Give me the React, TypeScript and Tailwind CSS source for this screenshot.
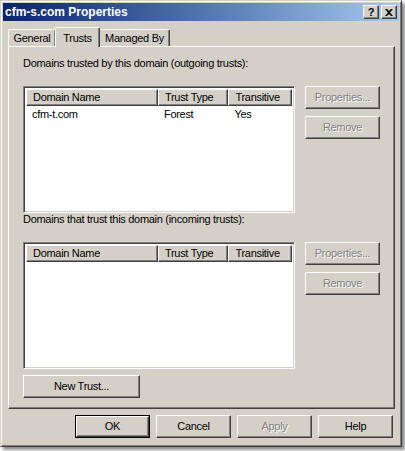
import React from "react";

const face = "bg-[#d4d0c8]";
const raised =
  "border border-t-white border-l-white border-r-[#404040] border-b-[#404040] shadow-[inset_-1px_-1px_0_#808080]";
const sunken =
  "border border-t-[#808080] border-l-[#808080] border-r-white border-b-white shadow-[inset_1px_1px_0_#404040,inset_-1px_-1px_0_#d4d0c8]";

function Btn({
  label,
  disabled,
  isDefault,
  className = "",
}: {
  label: string;
  disabled?: boolean;
  isDefault?: boolean;
  className?: string;
}) {
  const inner = (
    <div
      className={`${raised} ${face} h-full w-full flex items-center justify-center ${
        disabled ? "text-[#808080] [text-shadow:1px_1px_0_#ffffff]" : "text-black"
      }`}
    >
      {label}
    </div>
  );
  if (isDefault) {
    return <div className={`border border-black ${className}`}>{inner}</div>;
  }
  return <div className={className}>{inner}</div>;
}

function ListView({ rows }: { rows: string[][] }) {
  return (
    <div className={`${sunken} bg-white w-[272px] h-[127px] p-[2px] flex flex-col`}>
      <div className="flex h-[17px]">
        <div className={`${raised} ${face} w-[133px] pl-[6px] flex items-center`}>Domain Name</div>
        <div className={`${raised} ${face} w-[71px] pl-[6px] flex items-center`}>Trust Type</div>
        <div className={`${raised} ${face} w-[64px] pl-[6px] flex items-center`}>Transitive</div>
      </div>
      {rows.map((r) => (
        <div key={r[0]} className="flex h-[17px] items-center">
          <div className="w-[133px] pl-[6px]">{r[0]}</div>
          <div className="w-[71px] pl-[6px]">{r[1]}</div>
          <div className="w-[64px] pl-[6px]">{r[2]}</div>
        </div>
      ))}
    </div>
  );
}

function TrustSection({ title, rows }: { title: string; rows: string[][] }) {
  return (
    <div className="flex flex-col">
      <div className="h-[14px] leading-[14px]">{title}</div>
      <div className="flex gap-[10px] mt-[16px]">
        <ListView rows={rows} />
        <div className="flex flex-col gap-[7px]">
          <Btn label="Properties..." disabled className="w-[75px] h-[23px]" />
          <Btn label="Remove" disabled className="w-[75px] h-[23px]" />
        </div>
      </div>
    </div>
  );
}

export default function App() {
  return (
    <div
      className="w-[405px] h-[451px] bg-white text-[11px] tracking-[-0.3px] text-black"
      style={{ fontFamily: '"Liberation Sans", Arial, sans-serif' }}
    >
      <div
        className={`w-[402px] h-[447px] ${face} border border-t-[#d4d0c8] border-l-[#d4d0c8] border-r-[#404040] border-b-[#404040] shadow-[inset_1px_1px_0_#ffffff,inset_-1px_-1px_0_#808080,3px_3px_3px_rgba(0,0,0,0.45)] p-[2px] flex flex-col`}
      >
        {/* Title bar */}
        <div className="h-[18px] bg-gradient-to-r from-[#0a246a] to-[#a6caf0] flex items-center pl-[2px] pr-[2px]">
          <span className="text-white font-bold text-[12px] tracking-normal leading-none flex-1">cfm-s.com Properties</span>
          <div className="flex">
            <div className={`${raised} ${face} w-[16px] h-[14px] flex items-center justify-center font-bold text-[11px] leading-none`}>
              ?
            </div>
            <div className={`${raised} ${face} w-[16px] h-[14px] ml-[2px] flex items-center justify-center`}>
              <svg width="8" height="7" viewBox="0 0 8 7">
                <path d="M0 0h2l2 2 2-2h2L5 3.5 8 7H6L4 5 2 7H0l3-3.5z" fill="#000" />
              </svg>
            </div>
          </div>
        </div>

        {/* Tabs */}
        <div className="flex items-end h-[25px] pl-[5px]">
          <div className="h-[17px] w-[48px] border-t border-l border-t-white border-l-white border-r border-r-[#404040] shadow-[inset_-1px_0_0_#808080] rounded-t-[2px] flex items-center justify-center">
            General
          </div>
          <div className="h-[20px] w-[45px] -mx-[1px] border-t border-l border-t-white border-l-white border-r border-r-[#404040] shadow-[inset_-1px_0_0_#808080] rounded-t-[2px] flex items-start pt-[2px] justify-center relative z-10 top-[1px] bg-[#d4d0c8]">
            Trusts
          </div>
          <div className="h-[17px] w-[71px] border-t border-l border-t-white border-l-white border-r border-r-[#404040] shadow-[inset_-1px_0_0_#808080] rounded-t-[2px] flex items-center justify-center">
            Managed By
          </div>
        </div>

        {/* Tab panel */}
        <div className="ml-[5px] w-[387px] h-[363px] border border-t-white border-l-white border-r-[#404040] border-b-[#404040] shadow-[inset_-1px_-1px_0_#808080] pl-[14px] pt-[9px] flex flex-col">
          <TrustSection
            title="Domains trusted by this domain (outgoing trusts):"
            rows={[["cfm-t.com", "Forest", "Yes"]]}
          />
          <div className="-mt-[1px]">
            <TrustSection title="Domains that trust this domain (incoming trusts):" rows={[]} />
          </div>
          <Btn label="New Trust..." className="w-[117px] h-[23px] mt-[6px]" />
        </div>

        {/* Bottom buttons */}
        <div className="flex justify-end gap-[6px] mt-[6px] pr-[6px]">
          <Btn label="OK" isDefault className="w-[75px] h-[23px]" />
          <Btn label="Cancel" className="w-[75px] h-[23px]" />
          <Btn label="Apply" disabled className="w-[75px] h-[23px]" />
          <Btn label="Help" className="w-[75px] h-[23px]" />
        </div>
      </div>
    </div>
  );
}
